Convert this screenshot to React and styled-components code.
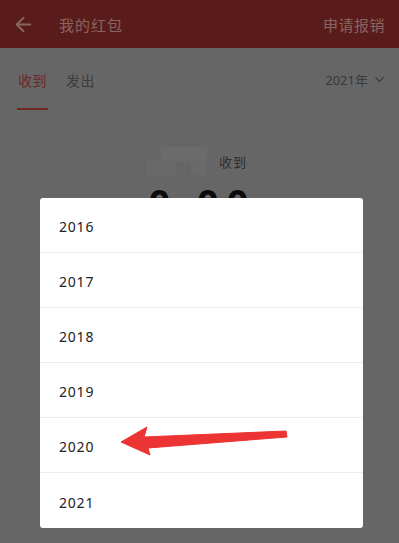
import React from "react";
import styled, { createGlobalStyle } from "styled-components";
import { ArrowLeft, ChevronDown } from "lucide-react";

const GlobalStyle = createGlobalStyle`
  html, body {
    margin: 0;
    padding: 0;
    background: #666666;
    font-family: "Noto Sans", "Noto Sans CJK SC", sans-serif;
  }
  #root {
    min-height: 100vh;
  }
`;

const Page = styled.div`
  width: 399px;
  height: 543px;
  overflow: hidden;
  position: relative;
  background: #666666;
`;

const Header = styled.header`
  height: 48px;
  background: #5a1c1b;
  display: flex;
  align-items: center;
  padding: 0 14px 0 12px;
  color: #8a6560;
`;

const Title = styled.div`
  margin-left: 24px;
  font-size: 15px;
  letter-spacing: 1px;
  flex: 1;
`;

const Action = styled.div`
  font-size: 15px;
  letter-spacing: 0.5px;
`;

const TabBar = styled.div`
  height: 64px;
  display: flex;
  align-items: flex-start;
  padding: 0 12px 0 17px;
`;

const Tab = styled.div`
  position: relative;
  height: 62px;
  padding: 22px 1px 0;
  box-sizing: border-box;
  margin-right: 17px;
  font-size: 14px;
  letter-spacing: 0.5px;
  color: ${(p) => (p.active ? "#6e2826" : "#3c3c3c")};
  border-bottom: 2px solid ${(p) => (p.active ? "#6e2826" : "transparent")};
`;

const YearPicker = styled.div`
  margin-left: auto;
  padding-top: 22px;
  display: flex;
  align-items: center;
  gap: 4px;
  font-size: 13px;
  color: #3a3a3a;
`;

const Summary = styled.section`
  display: flex;
  flex-direction: column;
  align-items: center;
  padding-top: 35px;
`;

const WhoRow = styled.div`
  display: flex;
  align-items: center;
  font-size: 13px;
  color: #2e2e2e;
  letter-spacing: 1px;
  margin-left: -6px;
`;

const Mosaic = styled.div`
  position: relative;
  width: 70px;
  height: 28px;
  margin-right: 3px;
`;

const Block = styled.span`
  position: absolute;
  background: ${(p) => p.color};
  left: ${(p) => p.x}px;
  top: ${(p) => p.y}px;
  width: ${(p) => p.w}px;
  height: ${(p) => p.h}px;
`;

const Amount = styled.div`
  margin-top: 8px;
  margin-left: 6px;
  font-size: 38px;
  font-weight: 700;
  color: #0c0c0c;
  letter-spacing: 8px;
  line-height: 1;
`;

const Dialog = styled.div`
  position: absolute;
  left: 40px;
  top: 198px;
  width: 323px;
  background: #ffffff;
  border-radius: 3px;
  overflow: hidden;
`;

const Option = styled.div`
  height: 55px;
  box-sizing: border-box;
  display: flex;
  align-items: center;
  padding: 3px 19px 0;
  font-size: 14px;
  letter-spacing: 0.8px;
  color: #222222;
  border-bottom: ${(p) => (p.last ? "none" : "1px solid #ececec")};
`;

const Pointer = styled.svg`
  position: absolute;
  left: 0;
  top: 0;
  pointer-events: none;
`;

const years = ["2016", "2017", "2018", "2019", "2020", "2021"];

export default function App() {
  return (
    <Page>
      <GlobalStyle />
      <Header>
        <ArrowLeft size={23} strokeWidth={2} />
        <Title>我的红包</Title>
        <Action>申请报销</Action>
      </Header>
      <TabBar>
        <Tab active>收到</Tab>
        <Tab>发出</Tab>
        <YearPicker>
          2021年
          <ChevronDown size={15} strokeWidth={1.8} />
        </YearPicker>
      </TabBar>
      <Summary>
        <WhoRow>
          <Mosaic>
            <Block color="#6b6b6b" x={15} y={0} w={46} h={14} />
            <Block color="#696969" x={0} y={14} w={30} h={14} />
            <Block color="#6a6a6a" x={45} y={14} w={15} h={14} />
          </Mosaic>
          收到
        </WhoRow>
        <Amount>0.00</Amount>
      </Summary>
      <Dialog>
        {years.map((y, i) => (
          <Option key={y} last={i === years.length - 1}>
            {y}
          </Option>
        ))}
      </Dialog>
      <Pointer width="399" height="543" viewBox="0 0 399 543">
        <polygon
          points="121,442 147,427 144,437 286,431 287,437 148,448 150,455"
          fill="#ec3434"
          stroke="#ec3434"
          strokeWidth="1"
          strokeLinejoin="round"
        />
      </Pointer>
    </Page>
  );
}
